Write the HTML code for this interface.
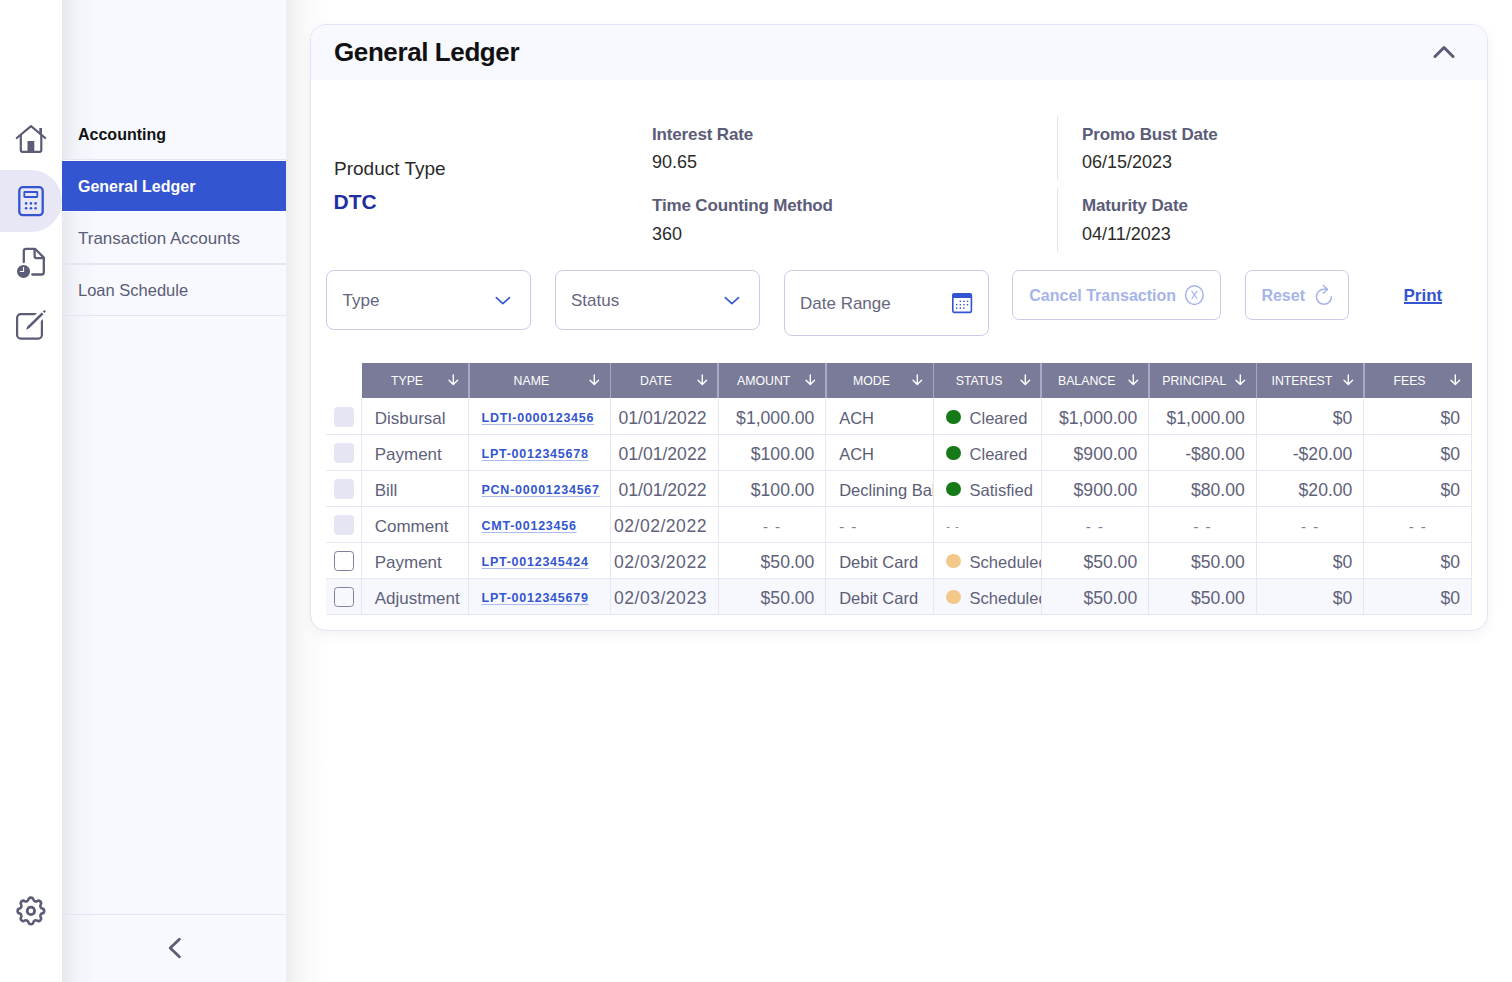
<!DOCTYPE html>
<html><head><meta charset="utf-8">
<style>
*{box-sizing:border-box;margin:0;padding:0}
html,body{width:1512px;height:982px;overflow:hidden;background:#fff;font-family:"Liberation Sans",sans-serif;position:relative}
.abs{position:absolute}
.t{position:absolute;line-height:1;white-space:nowrap}
#rail{left:0;top:0;width:62px;height:982px;background:#fff}
#side{left:62px;top:0;width:224px;height:982px;background:#f8f9fe}
#shadow{left:286px;top:0;width:44px;height:982px;background:linear-gradient(to right,rgba(0,0,0,0.075),rgba(0,0,0,0.045) 8px,rgba(0,0,0,0.02) 20px,rgba(0,0,0,0) 44px)}
.hr{position:absolute;left:0;width:224px;height:2px;background:#e4e4f2}
#card{left:310px;top:24px;width:1178px;height:607px;border:1px solid #e3e3f6;border-radius:16px;background:#fff;box-shadow:0 4px 14px rgba(20,20,50,0.05);overflow:hidden}
#chead{left:0;top:0;width:100%;height:55px;background:#f8f9fe}
.lbl{font-size:17px;font-weight:bold;color:#5b5c78;letter-spacing:-0.15px}
.val{font-size:18px;color:#2b2b2b}
.box{position:absolute;border:1px solid #cacbe6;border-radius:8px;background:#fff}
.lnk{font-weight:bold;color:#3355d1;letter-spacing:0.75px;text-decoration:underline;text-decoration-color:#aebbf0;text-decoration-thickness:1px;text-underline-offset:2px}
.btxt{font-size:16px;font-weight:bold;color:#a6b4ea}
</style></head><body>
<div id="rail" class="abs">
  <!-- home -->
  <svg class="abs" style="left:0;top:0" width="62" height="982" viewBox="0 0 62 982">
    <g fill="none" stroke="#5b5c75" stroke-width="2.2" stroke-linecap="round" stroke-linejoin="round">
      <path d="M16.8 138 L31 126.2 L45.2 138"/>
      <path d="M20.8 135 V150 Q20.8 151.8 22.6 151.8 H39.5 Q41.3 151.8 41.3 150 V135"/>
    </g>
    <rect x="39.3" y="128" width="2.7" height="6.5" fill="#5b5c75"/>
    <rect x="27.5" y="141" width="6.8" height="10.5" fill="#5b5c75"/>
    <!-- selected pill -->
    <path d="M0 170 H31 A31 31 0 0 1 31 232 H0 Z" fill="#e8e7f5"/>
    <g fill="none" stroke="#3355d1" stroke-width="2.3">
      <rect x="19.3" y="187.2" width="23.4" height="28" rx="3.5"/>
      <rect x="24.3" y="192" width="13" height="5" rx="0.5" stroke-width="1.8"/>
    </g>
    <g fill="#3355d1">
      <circle cx="26.1" cy="203.4" r="1.3"/><circle cx="30.9" cy="203.4" r="1.3"/><circle cx="35.6" cy="203.4" r="1.3"/>
      <circle cx="26.1" cy="208.3" r="1.3"/><circle cx="30.9" cy="208.3" r="1.3"/><circle cx="35.6" cy="208.3" r="1.3"/>
    </g>
    <!-- doc clock -->
    <g fill="none" stroke="#5b5c75" stroke-width="2.3" stroke-linejoin="round" stroke-linecap="round">
      <path d="M23.8 262 V251 Q23.8 248.8 26 248.8 H35 L43.8 257.6 V272.3 Q43.8 274.5 41.6 274.5 H32.3"/>
      <path d="M34.6 249.2 V256.3 Q34.6 258.2 36.5 258.2 H43.5"/>
    </g>
    <circle cx="23.5" cy="271.4" r="6.5" fill="#5b5c75"/>
    <path d="M23.55 266.9 V271.55 H19.8" fill="none" stroke="#fff" stroke-width="1.1"/>
    <!-- edit -->
    <rect x="17.1" y="314.1" width="24.8" height="24.5" rx="3.6" fill="none" stroke="#5b5c75" stroke-width="2.2"/>
    <path d="M31 325 L47 309" stroke="#fff" stroke-width="8.4"/>
    <path d="M25.9 329.8 L27.36 326.43 L41.66 312.43 L43.54 314.37 L29.24 328.37 Z" fill="#5b5c75"/>
    <path d="M44.3 309.9 L45.9 311.5 L44.3 313.1 L42.7 311.5 Z" fill="#5b5c75"/>
    <!-- gear -->
    <g transform="translate(13.14 893.14) scale(1.48)" fill="none" stroke="#5b5c75" stroke-width="1.75" stroke-linecap="round" stroke-linejoin="round"><path d="M10.325 4.317c.426 -1.756 2.924 -1.756 3.35 0a1.724 1.724 0 0 0 2.573 1.066c1.543 -.94 3.31 .826 2.37 2.37a1.724 1.724 0 0 0 1.065 2.572c1.756 .426 1.756 2.924 0 3.35a1.724 1.724 0 0 0 -1.066 2.573c.94 1.543 -.826 3.31 -2.37 2.37a1.724 1.724 0 0 0 -2.572 1.065c-.426 1.756 -2.924 1.756 -3.35 0a1.724 1.724 0 0 0 -2.573 -1.066c-1.543 .94 -3.31 -.826 -2.37 -2.37a1.724 1.724 0 0 0 -1.065 -2.572c-1.756 -.426 -1.756 -2.924 0 -3.35a1.724 1.724 0 0 0 1.066 -2.573c-.94 -1.543 .826 -3.31 2.37 -2.37c1 .608 2.296 .07 2.572 -1.065z"/><circle cx="12" cy="12" r="2.5" stroke-width="1.9"/></g>
  </svg>
</div>
<div id="side" class="abs">
  <div class="abs" style="left:0;top:0;width:44px;height:982px;background:linear-gradient(to right,rgba(20,20,60,0.07),rgba(20,20,60,0.02) 16px,rgba(20,20,60,0) 38px)"></div>
  <div class="t" style="left:16px;top:126.8px;font-size:16px;font-weight:bold;color:#111">Accounting</div>
  <div class="hr" style="top:159px;height:1px"></div>
  <div class="abs" style="left:0;top:160px;width:224px;height:1px;background:#fff"></div>
  <div class="abs" style="left:0;top:161px;width:224px;height:50px;background:#3355d1"></div>
  <div class="abs" style="left:0;top:211px;width:224px;height:1px;background:#fff"></div>
  <div class="t" style="left:16px;top:178.7px;font-size:16px;font-weight:bold;color:#fff">General Ledger</div>
  <div class="t" style="left:16px;top:229.8px;font-size:17px;color:#5b5c75">Transaction Accounts</div>
  <div class="hr" style="top:263px"></div>
  <div class="t" style="left:16px;top:281.8px;font-size:16.5px;color:#5b5c75">Loan Schedule</div>
  <div class="hr" style="top:315px;height:1px"></div>
  <div class="hr" style="top:914px;height:1px"></div>
  <svg class="abs" style="left:100px;top:934px" width="30" height="28"><path d="M17.4 5.2 L8.2 14 L17.4 22.8" fill="none" stroke="#5b5c75" stroke-width="2.8" stroke-linecap="round" stroke-linejoin="round"/></svg>
</div>
<div id="shadow" class="abs"></div>
<div id="card" class="abs">
  <div id="chead" class="abs"></div>
</div>
<!-- card content (body coords) -->
<div class="t" style="left:334px;top:39px;font-size:26px;font-weight:bold;color:#111;letter-spacing:-0.4px">General Ledger</div>
<svg class="abs" style="left:1428px;top:37px" width="32" height="28"><path d="M7 19.5 L16 10.5 L25 19.5" fill="none" stroke="#5b5c75" stroke-width="3" stroke-linecap="round" stroke-linejoin="round"/></svg>

<div class="t" style="left:334px;top:158.8px;font-size:19px;color:#2b2b2b">Product Type</div>
<div class="t" style="left:333.5px;top:191.2px;font-size:21px;font-weight:bold;color:#1f2f9f">DTC</div>

<div class="t lbl" style="left:652px;top:125.6px">Interest Rate</div>
<div class="t val" style="left:652px;top:153.2px">90.65</div>
<div class="t lbl" style="left:652px;top:197.4px">Time Counting Method</div>
<div class="t val" style="left:652px;top:225.2px">360</div>

<div class="abs" style="left:1057px;top:116px;width:1px;height:64px;background:#e4e4f2"></div>
<div class="abs" style="left:1057px;top:188px;width:1px;height:64px;background:#e4e4f2"></div>
<div class="t lbl" style="left:1082px;top:125.6px">Promo Bust Date</div>
<div class="t val" style="left:1082px;top:153.2px">06/15/2023</div>
<div class="t lbl" style="left:1082px;top:197.4px">Maturity Date</div>
<div class="t val" style="left:1082px;top:225.2px">04/11/2023</div>

<!-- filters -->
<div class="box" style="left:326px;top:270px;width:205px;height:60px"></div>
<div class="t" style="left:342.5px;top:291.8px;font-size:17px;color:#65667e">Type</div>
<svg class="abs" style="left:490px;top:290px" width="26" height="20"><path d="M6.3 7.6 L12.9 13.6 L19.5 7.6" fill="none" stroke="#3355d1" stroke-width="1.6" stroke-linecap="round" stroke-linejoin="round"/></svg>
<div class="box" style="left:555px;top:270px;width:205px;height:60px"></div>
<div class="t" style="left:571px;top:291.8px;font-size:17px;color:#65667e">Status</div>
<svg class="abs" style="left:719px;top:290px" width="26" height="20"><path d="M6.3 7.6 L12.9 13.6 L19.5 7.6" fill="none" stroke="#3355d1" stroke-width="1.6" stroke-linecap="round" stroke-linejoin="round"/></svg>
<div class="box" style="left:784px;top:270px;width:205px;height:66px"></div>
<div class="t" style="left:800px;top:294.8px;font-size:17px;color:#65667e">Date Range</div>
<svg class="abs" style="left:950px;top:291px" width="24" height="24">
  <rect x="2.8" y="2.8" width="18.6" height="18.6" rx="2" fill="none" stroke="#3355d1" stroke-width="1.6"/>
  <rect x="2.2" y="2.2" width="19.8" height="4.8" rx="1.5" fill="#3355d1"/>
  <g fill="#3355d1">
    <rect x="9.6" y="9.6" width="1.4" height="1.4"/><rect x="13.2" y="9.6" width="1.4" height="1.4"/><rect x="16.8" y="9.6" width="1.4" height="1.4"/>
    <rect x="6" y="13" width="1.4" height="1.4"/><rect x="9.6" y="13" width="1.4" height="1.4"/><rect x="13.2" y="13" width="1.4" height="1.4"/><rect x="16.8" y="13" width="1.4" height="1.4"/>
    <rect x="6" y="16.4" width="1.4" height="1.4"/><rect x="9.6" y="16.4" width="1.4" height="1.4"/><rect x="13.2" y="16.4" width="1.4" height="1.4"/>
  </g>
</svg>

<div class="box" style="left:1012px;top:270px;width:209px;height:50px;border-radius:7px"></div>
<div class="t btxt" style="left:1029.3px;top:288px">Cancel Transaction</div>
<svg class="abs" style="left:1182px;top:283px" width="25" height="25">
  <ellipse cx="12.4" cy="12.1" rx="8.8" ry="9.4" fill="none" stroke="#a6b4ea" stroke-width="1.5"/>
  <path d="M9.6 7.8 L15.3 16 M15.3 7.8 L9.6 16" stroke="#a6b4ea" stroke-width="1.2" fill="none"/>
</svg>
<div class="box" style="left:1245px;top:270px;width:104px;height:50px;border-radius:7px"></div>
<div class="t btxt" style="left:1261.4px;top:288px">Reset</div>
<svg class="abs" style="left:1311px;top:283px" width="26" height="26">
  <path d="M20.4 13.8 A7.5 7.5 0 1 1 12.9 6.3 H16.3" fill="none" stroke="#a6b4ea" stroke-width="1.5" stroke-linecap="round"/>
  <path d="M12.3 2.5 L16.5 6.4 L12.3 10.3" fill="none" stroke="#a6b4ea" stroke-width="1.5" stroke-linecap="round" stroke-linejoin="round"/>
</svg>
<div class="t" style="left:1403.5px;top:286.8px;font-size:17px;font-weight:bold;color:#3355d1">Print</div>
<div class="abs" style="left:1403.5px;top:302px;width:38.5px;height:1.5px;background:#3355d1"></div>

<!--TABLE-->
<div class="abs" style="left:362px;top:363px;width:1109.8px;height:35px;background:#7a7b98"></div>
<div class="t" style="left:362.0px;top:374.6px;width:90.0px;text-align:center;font-size:12.3px;color:#fff">TYPE</div>
<svg class="abs" style="left:447.6px;top:374px" width="11" height="12"><path d="M5.3 1 V10.5 M1 6.3 L5.3 10.6 L9.6 6.3" fill="none" stroke="#fff" stroke-width="1.4" stroke-linecap="round" stroke-linejoin="round"/></svg>
<div class="abs" style="left:468.0px;top:363px;width:1.6px;height:35px;background:#a9aac0"></div>
<div class="t" style="left:469.0px;top:374.6px;width:124.7px;text-align:center;font-size:12.3px;color:#fff">NAME</div>
<svg class="abs" style="left:589.3px;top:374px" width="11" height="12"><path d="M5.3 1 V10.5 M1 6.3 L5.3 10.6 L9.6 6.3" fill="none" stroke="#fff" stroke-width="1.4" stroke-linecap="round" stroke-linejoin="round"/></svg>
<div class="abs" style="left:609.7px;top:363px;width:1.6px;height:35px;background:#a9aac0"></div>
<div class="t" style="left:610.7px;top:374.6px;width:90.6px;text-align:center;font-size:12.3px;color:#fff">DATE</div>
<svg class="abs" style="left:696.9px;top:374px" width="11" height="12"><path d="M5.3 1 V10.5 M1 6.3 L5.3 10.6 L9.6 6.3" fill="none" stroke="#fff" stroke-width="1.4" stroke-linecap="round" stroke-linejoin="round"/></svg>
<div class="abs" style="left:717.3px;top:363px;width:1.6px;height:35px;background:#a9aac0"></div>
<div class="t" style="left:718.3px;top:374.6px;width:90.9px;text-align:center;font-size:12.3px;color:#fff">AMOUNT</div>
<svg class="abs" style="left:804.8px;top:374px" width="11" height="12"><path d="M5.3 1 V10.5 M1 6.3 L5.3 10.6 L9.6 6.3" fill="none" stroke="#fff" stroke-width="1.4" stroke-linecap="round" stroke-linejoin="round"/></svg>
<div class="abs" style="left:825.2px;top:363px;width:1.6px;height:35px;background:#a9aac0"></div>
<div class="t" style="left:826.2px;top:374.6px;width:90.6px;text-align:center;font-size:12.3px;color:#fff">MODE</div>
<svg class="abs" style="left:912.4px;top:374px" width="11" height="12"><path d="M5.3 1 V10.5 M1 6.3 L5.3 10.6 L9.6 6.3" fill="none" stroke="#fff" stroke-width="1.4" stroke-linecap="round" stroke-linejoin="round"/></svg>
<div class="abs" style="left:932.8px;top:363px;width:1.6px;height:35px;background:#a9aac0"></div>
<div class="t" style="left:933.8px;top:374.6px;width:90.6px;text-align:center;font-size:12.3px;color:#fff">STATUS</div>
<svg class="abs" style="left:1020.0px;top:374px" width="11" height="12"><path d="M5.3 1 V10.5 M1 6.3 L5.3 10.6 L9.6 6.3" fill="none" stroke="#fff" stroke-width="1.4" stroke-linecap="round" stroke-linejoin="round"/></svg>
<div class="abs" style="left:1040.4px;top:363px;width:1.6px;height:35px;background:#a9aac0"></div>
<div class="t" style="left:1041.4px;top:374.6px;width:90.6px;text-align:center;font-size:12.3px;color:#fff">BALANCE</div>
<svg class="abs" style="left:1127.6px;top:374px" width="11" height="12"><path d="M5.3 1 V10.5 M1 6.3 L5.3 10.6 L9.6 6.3" fill="none" stroke="#fff" stroke-width="1.4" stroke-linecap="round" stroke-linejoin="round"/></svg>
<div class="abs" style="left:1148.0px;top:363px;width:1.6px;height:35px;background:#a9aac0"></div>
<div class="t" style="left:1149.0px;top:374.6px;width:90.6px;text-align:center;font-size:12.3px;color:#fff">PRINCIPAL</div>
<svg class="abs" style="left:1235.2px;top:374px" width="11" height="12"><path d="M5.3 1 V10.5 M1 6.3 L5.3 10.6 L9.6 6.3" fill="none" stroke="#fff" stroke-width="1.4" stroke-linecap="round" stroke-linejoin="round"/></svg>
<div class="abs" style="left:1255.6px;top:363px;width:1.6px;height:35px;background:#a9aac0"></div>
<div class="t" style="left:1256.6px;top:374.6px;width:90.6px;text-align:center;font-size:12.3px;color:#fff">INTEREST</div>
<svg class="abs" style="left:1342.8px;top:374px" width="11" height="12"><path d="M5.3 1 V10.5 M1 6.3 L5.3 10.6 L9.6 6.3" fill="none" stroke="#fff" stroke-width="1.4" stroke-linecap="round" stroke-linejoin="round"/></svg>
<div class="abs" style="left:1363.2px;top:363px;width:1.6px;height:35px;background:#a9aac0"></div>
<div class="t" style="left:1364.2px;top:374.6px;width:90.6px;text-align:center;font-size:12.3px;color:#fff">FEES</div>
<svg class="abs" style="left:1450.4px;top:374px" width="11" height="12"><path d="M5.3 1 V10.5 M1 6.3 L5.3 10.6 L9.6 6.3" fill="none" stroke="#fff" stroke-width="1.4" stroke-linecap="round" stroke-linejoin="round"/></svg>
<div class="abs" style="left:326px;top:434.0px;width:1146px;height:1px;background:#e6e6f6"></div>
<div class="abs" style="left:334px;top:406.5px;width:20px;height:20px;border-radius:4px;background:#e6e5f3"></div>
<div class="t" style="left:374.7px;top:409.6px;font-size:17.0px;color:#60617a">Disbursal</div>
<div class="t lnk" style="left:481.5px;top:411.7px;font-size:12.5px">LDTI-0000123456</div>
<div class="t" style="left:610.7px;top:409.7px;width:95.8px;text-align:right;font-size:17.6px;color:#60617a;letter-spacing:0px">01/01/2022</div>
<div class="t" style="left:718.3px;top:409.7px;width:96.1px;text-align:right;font-size:17.6px;color:#60617a;letter-spacing:0px">$1,000.00</div>
<div class="abs" style="left:826.2px;top:398px;width:106.6px;height:35px;overflow:hidden"><div class="t" style="left:13px;top:12.0px;font-size:16.5px;color:#5b5c75">ACH</div></div>
<div class="abs" style="left:933.8px;top:398px;width:107.6px;height:35px;overflow:hidden"><div class="abs" style="left:12.4px;top:11.7px;width:14.8px;height:14.8px;border-radius:50%;background:#157a17"></div><div class="t" style="left:35.8px;top:12.0px;font-size:16.5px;color:#60617a">Cleared</div></div>
<div class="t" style="left:1041.4px;top:409.7px;width:95.8px;text-align:right;font-size:17.6px;color:#60617a;letter-spacing:0px">$1,000.00</div>
<div class="t" style="left:1149.0px;top:409.7px;width:95.8px;text-align:right;font-size:17.6px;color:#60617a;letter-spacing:0px">$1,000.00</div>
<div class="t" style="left:1256.6px;top:409.7px;width:95.8px;text-align:right;font-size:17.6px;color:#60617a;letter-spacing:0px">$0</div>
<div class="t" style="left:1364.2px;top:409.7px;width:95.8px;text-align:right;font-size:17.6px;color:#60617a;letter-spacing:0px">$0</div>
<div class="abs" style="left:326px;top:470.0px;width:1146px;height:1px;background:#e6e6f6"></div>
<div class="abs" style="left:334px;top:442.5px;width:20px;height:20px;border-radius:4px;background:#e6e5f3"></div>
<div class="t" style="left:374.7px;top:445.6px;font-size:17.0px;color:#60617a">Payment</div>
<div class="t lnk" style="left:481.5px;top:447.7px;font-size:12.5px">LPT-0012345678</div>
<div class="t" style="left:610.7px;top:445.7px;width:95.8px;text-align:right;font-size:17.6px;color:#60617a;letter-spacing:0px">01/01/2022</div>
<div class="t" style="left:718.3px;top:445.7px;width:96.1px;text-align:right;font-size:17.6px;color:#60617a;letter-spacing:0px">$100.00</div>
<div class="abs" style="left:826.2px;top:434px;width:106.6px;height:35px;overflow:hidden"><div class="t" style="left:13px;top:12.0px;font-size:16.5px;color:#5b5c75">ACH</div></div>
<div class="abs" style="left:933.8px;top:434px;width:107.6px;height:35px;overflow:hidden"><div class="abs" style="left:12.4px;top:11.7px;width:14.8px;height:14.8px;border-radius:50%;background:#157a17"></div><div class="t" style="left:35.8px;top:12.0px;font-size:16.5px;color:#60617a">Cleared</div></div>
<div class="t" style="left:1041.4px;top:445.7px;width:95.8px;text-align:right;font-size:17.6px;color:#60617a;letter-spacing:0px">$900.00</div>
<div class="t" style="left:1149.0px;top:445.7px;width:95.8px;text-align:right;font-size:17.6px;color:#60617a;letter-spacing:0px">-$80.00</div>
<div class="t" style="left:1256.6px;top:445.7px;width:95.8px;text-align:right;font-size:17.6px;color:#60617a;letter-spacing:0px">-$20.00</div>
<div class="t" style="left:1364.2px;top:445.7px;width:95.8px;text-align:right;font-size:17.6px;color:#60617a;letter-spacing:0px">$0</div>
<div class="abs" style="left:326px;top:506.0px;width:1146px;height:1px;background:#e6e6f6"></div>
<div class="abs" style="left:334px;top:478.5px;width:20px;height:20px;border-radius:4px;background:#e6e5f3"></div>
<div class="t" style="left:374.7px;top:481.6px;font-size:17.0px;color:#60617a">Bill</div>
<div class="t lnk" style="left:481.5px;top:483.7px;font-size:12.5px">PCN-00001234567</div>
<div class="t" style="left:610.7px;top:481.7px;width:95.8px;text-align:right;font-size:17.6px;color:#60617a;letter-spacing:0px">01/01/2022</div>
<div class="t" style="left:718.3px;top:481.7px;width:96.1px;text-align:right;font-size:17.6px;color:#60617a;letter-spacing:0px">$100.00</div>
<div class="abs" style="left:826.2px;top:470px;width:106.6px;height:35px;overflow:hidden"><div class="t" style="left:13px;top:12.0px;font-size:16.5px;color:#5b5c75">Declining Balance</div></div>
<div class="abs" style="left:933.8px;top:470px;width:107.6px;height:35px;overflow:hidden"><div class="abs" style="left:12.4px;top:11.7px;width:14.8px;height:14.8px;border-radius:50%;background:#157a17"></div><div class="t" style="left:35.8px;top:12.0px;font-size:16.5px;color:#60617a">Satisfied</div></div>
<div class="t" style="left:1041.4px;top:481.7px;width:95.8px;text-align:right;font-size:17.6px;color:#60617a;letter-spacing:0px">$900.00</div>
<div class="t" style="left:1149.0px;top:481.7px;width:95.8px;text-align:right;font-size:17.6px;color:#60617a;letter-spacing:0px">$80.00</div>
<div class="t" style="left:1256.6px;top:481.7px;width:95.8px;text-align:right;font-size:17.6px;color:#60617a;letter-spacing:0px">$20.00</div>
<div class="t" style="left:1364.2px;top:481.7px;width:95.8px;text-align:right;font-size:17.6px;color:#60617a;letter-spacing:0px">$0</div>
<div class="abs" style="left:326px;top:542.0px;width:1146px;height:1px;background:#e6e6f6"></div>
<div class="abs" style="left:334px;top:514.5px;width:20px;height:20px;border-radius:4px;background:#e6e5f3"></div>
<div class="t" style="left:374.7px;top:517.6px;font-size:17.0px;color:#60617a">Comment</div>
<div class="t lnk" style="left:481.5px;top:519.7px;font-size:12.5px">CMT-00123456</div>
<div class="t" style="left:610.7px;top:517.7px;width:96.3px;text-align:right;font-size:17.6px;color:#60617a;letter-spacing:0.5px">02/02/2022</div>
<div class="t" style="left:718.3px;top:519.3px;width:107.9px;text-align:center;font-size:15px;color:#7c7d92;letter-spacing:1.5px">- -</div>
<div class="t" style="left:839.2px;top:519.3px;font-size:15px;color:#7c7d92;letter-spacing:1.5px">- -</div>
<div class="t" style="left:946.2px;top:520.7px;font-size:11px;color:#7c7d92;letter-spacing:1px">- -</div>
<div class="t" style="left:1041.4px;top:519.3px;width:107.6px;text-align:center;font-size:15px;color:#7c7d92;letter-spacing:1.5px">- -</div>
<div class="t" style="left:1149.0px;top:519.3px;width:107.6px;text-align:center;font-size:15px;color:#7c7d92;letter-spacing:1.5px">- -</div>
<div class="t" style="left:1256.6px;top:519.3px;width:107.6px;text-align:center;font-size:15px;color:#7c7d92;letter-spacing:1.5px">- -</div>
<div class="t" style="left:1364.2px;top:519.3px;width:107.6px;text-align:center;font-size:15px;color:#7c7d92;letter-spacing:1.5px">- -</div>
<div class="abs" style="left:326px;top:578.0px;width:1146px;height:1px;background:#e6e6f6"></div>
<div class="abs" style="left:334px;top:550.5px;width:20px;height:20px;border-radius:3.5px;border:1.5px solid #7f809b;background:transparent"></div>
<div class="t" style="left:374.7px;top:553.6px;font-size:17.0px;color:#60617a">Payment</div>
<div class="t lnk" style="left:481.5px;top:555.7px;font-size:12.5px">LPT-0012345424</div>
<div class="t" style="left:610.7px;top:553.7px;width:96.3px;text-align:right;font-size:17.6px;color:#60617a;letter-spacing:0.5px">02/03/2022</div>
<div class="t" style="left:718.3px;top:553.7px;width:96.1px;text-align:right;font-size:17.6px;color:#60617a;letter-spacing:0px">$50.00</div>
<div class="abs" style="left:826.2px;top:542px;width:106.6px;height:35px;overflow:hidden"><div class="t" style="left:13px;top:12.0px;font-size:16.5px;color:#5b5c75">Debit Card</div></div>
<div class="abs" style="left:933.8px;top:542px;width:107.6px;height:35px;overflow:hidden"><div class="abs" style="left:12.4px;top:11.7px;width:14.8px;height:14.8px;border-radius:50%;background:#f2c98a"></div><div class="t" style="left:35.8px;top:12.0px;font-size:16.5px;color:#60617a">Scheduled</div></div>
<div class="t" style="left:1041.4px;top:553.7px;width:95.8px;text-align:right;font-size:17.6px;color:#60617a;letter-spacing:0px">$50.00</div>
<div class="t" style="left:1149.0px;top:553.7px;width:95.8px;text-align:right;font-size:17.6px;color:#60617a;letter-spacing:0px">$50.00</div>
<div class="t" style="left:1256.6px;top:553.7px;width:95.8px;text-align:right;font-size:17.6px;color:#60617a;letter-spacing:0px">$0</div>
<div class="t" style="left:1364.2px;top:553.7px;width:95.8px;text-align:right;font-size:17.6px;color:#60617a;letter-spacing:0px">$0</div>
<div class="abs" style="left:326px;top:579.0px;width:1145.8px;height:36px;background:#f7f8fd"></div>
<div class="abs" style="left:326px;top:614.0px;width:1146px;height:1px;background:#e6e6f6"></div>
<div class="abs" style="left:334px;top:586.5px;width:20px;height:20px;border-radius:3.5px;border:1.5px solid #7f809b;background:transparent"></div>
<div class="t" style="left:374.7px;top:589.6px;font-size:17.0px;color:#60617a">Adjustment</div>
<div class="t lnk" style="left:481.5px;top:591.7px;font-size:12.5px">LPT-0012345679</div>
<div class="t" style="left:610.7px;top:589.7px;width:96.3px;text-align:right;font-size:17.6px;color:#60617a;letter-spacing:0.5px">02/03/2023</div>
<div class="t" style="left:718.3px;top:589.7px;width:96.1px;text-align:right;font-size:17.6px;color:#60617a;letter-spacing:0px">$50.00</div>
<div class="abs" style="left:826.2px;top:578px;width:106.6px;height:35px;overflow:hidden"><div class="t" style="left:13px;top:12.0px;font-size:16.5px;color:#5b5c75">Debit Card</div></div>
<div class="abs" style="left:933.8px;top:578px;width:107.6px;height:35px;overflow:hidden"><div class="abs" style="left:12.4px;top:11.7px;width:14.8px;height:14.8px;border-radius:50%;background:#f2c98a"></div><div class="t" style="left:35.8px;top:12.0px;font-size:16.5px;color:#60617a">Scheduled</div></div>
<div class="t" style="left:1041.4px;top:589.7px;width:95.8px;text-align:right;font-size:17.6px;color:#60617a;letter-spacing:0px">$50.00</div>
<div class="t" style="left:1149.0px;top:589.7px;width:95.8px;text-align:right;font-size:17.6px;color:#60617a;letter-spacing:0px">$50.00</div>
<div class="t" style="left:1256.6px;top:589.7px;width:95.8px;text-align:right;font-size:17.6px;color:#60617a;letter-spacing:0px">$0</div>
<div class="t" style="left:1364.2px;top:589.7px;width:95.8px;text-align:right;font-size:17.6px;color:#60617a;letter-spacing:0px">$0</div>
<div class="abs" style="left:361px;top:398.0px;width:1px;height:216.0px;background:#e6e6f6"></div>
<div class="abs" style="left:468px;top:398.0px;width:1px;height:216.0px;background:#e6e6f6"></div>
<div class="abs" style="left:610px;top:398.0px;width:1px;height:216.0px;background:#e6e6f6"></div>
<div class="abs" style="left:718px;top:398.0px;width:1px;height:216.0px;background:#e6e6f6"></div>
<div class="abs" style="left:825px;top:398.0px;width:1px;height:216.0px;background:#e6e6f6"></div>
<div class="abs" style="left:933px;top:398.0px;width:1px;height:216.0px;background:#e6e6f6"></div>
<div class="abs" style="left:1041px;top:398.0px;width:1px;height:216.0px;background:#e6e6f6"></div>
<div class="abs" style="left:1148px;top:398.0px;width:1px;height:216.0px;background:#e6e6f6"></div>
<div class="abs" style="left:1256px;top:398.0px;width:1px;height:216.0px;background:#e6e6f6"></div>
<div class="abs" style="left:1363px;top:398.0px;width:1px;height:216.0px;background:#e6e6f6"></div>
<div class="abs" style="left:1471px;top:398.0px;width:1px;height:216.0px;background:#e6e6f6"></div>
<!--/TABLE-->
</body></html>
